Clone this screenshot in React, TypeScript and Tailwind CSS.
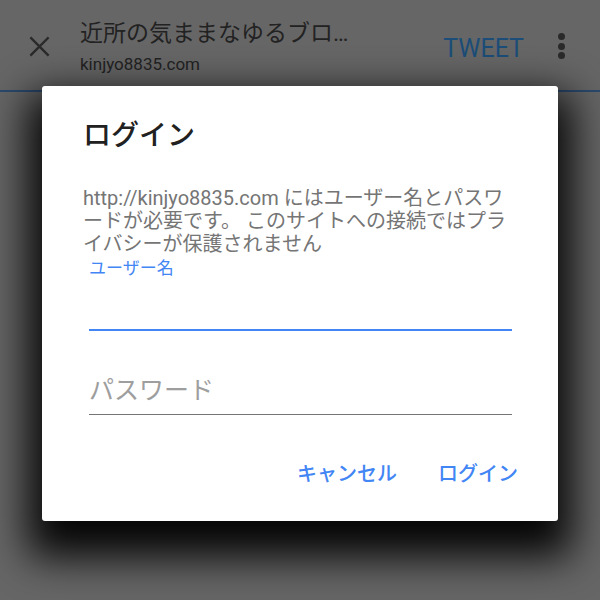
import React from "react";

export default function App() {
  const font = { fontFamily: 'Roboto, "Noto Sans CJK JP", sans-serif' };
  return (
    <div className="relative w-[600px] h-[600px] overflow-hidden bg-[#666666]" style={font}>
      <div className="h-[92px] flex border-b-2 border-[#2b4a6e]">
        <div className="w-[80px] flex justify-center pt-[34px] pr-[1px]">
          <svg width="25" height="25" viewBox="0 0 24 24" fill="none" stroke="#2a2a2a" strokeWidth="2.2" strokeLinecap="square">
            <path d="M4 4 L20 20 M20 4 L4 20" />
          </svg>
        </div>
        <div className="flex-1 flex flex-col pt-[19px]">
          <div className="text-[23px] leading-[30px] text-[#222]">近所の気ままなゆるブロ…</div>
          <div className="text-[17px] leading-[22px] text-[#222] mt-[4px]">kinjyo8835.com</div>
        </div>
        <div className="text-[25px] leading-[30px] text-[#1c4d78] mr-[34px] pt-[34px]">TWEET</div>
        <div className="flex flex-col gap-[2.5px] mr-[35px] pt-[33px]">
          <div className="w-[7px] h-[7px] rounded-full bg-[#2a2a2a]" />
          <div className="w-[7px] h-[7px] rounded-full bg-[#2a2a2a]" />
          <div className="w-[7px] h-[7px] rounded-full bg-[#2a2a2a]" />
        </div>
      </div>

      <div className="absolute left-[42px] top-[86px] w-[516px] h-[435px] bg-white rounded-[3px] shadow-[0_22px_40px_14px_rgba(0,0,0,0.95)] flex flex-col pl-[41px] pr-[41px] pt-[33px]">
        <div className="text-[28px] leading-[34px] font-medium text-[#212121]">ログイン</div>
        <div className="mt-[34px] text-[20px] leading-[23px] text-[#757575]">
          http://kinjyo8835.com にはユーザー名とパスワードが必要です。 このサイトへの接続ではプライバシーが保護されません
        </div>
        <div className="ml-[6px] mr-[5px] mt-[1px] flex flex-col">
          <div className="text-[17px] leading-[22px] text-[#4285f4]">ユーザー名</div>
          <div className="h-[52px] border-b-2 border-[#4285f4]" />
          <div className="h-[84px] flex items-end border-b border-[#757575]">
            <span className="text-[25px] leading-[32px] text-[#9e9e9e] pb-[7px]">パスワード</span>
          </div>
        </div>
        <div className="flex justify-end gap-[41px] mt-[47px] mr-[-1px] text-[20px] leading-[24px] font-medium text-[#4285f4]">
          <span>キャンセル</span>
          <span>ログイン</span>
        </div>
      </div>
    </div>
  );
}
